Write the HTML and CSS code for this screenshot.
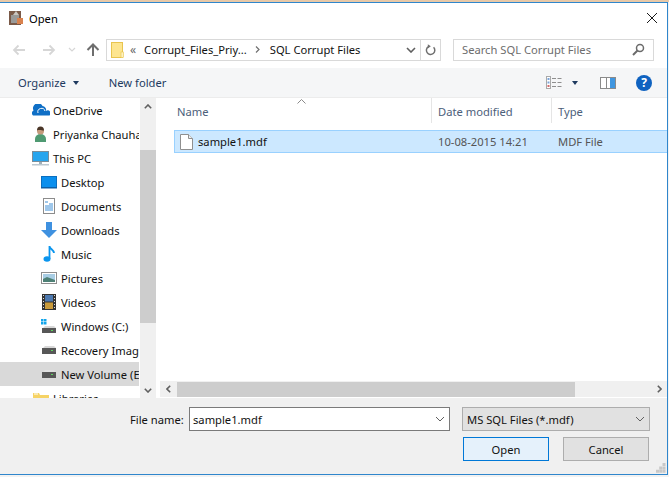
FILE: index.html
```html
<!DOCTYPE html>
<html lang="en">
<head>
<meta charset="utf-8">
<title>Open</title>
<link rel="stylesheet" href="styles.css">
</head>
<body>
<div class="desktop"></div>
<div class="window">
  <header class="titlebar">
    <svg class="app-icon" width="14" height="16" viewBox="0 0 14 16"><rect x="0" y="1" width="12" height="14" fill="#7a5a48"/><rect x="2" y="5" width="8" height="8" fill="#9a9a98"/><path d="M4 5l3-4 3 4z" fill="#c9c6c0"/><rect x="8" y="8" width="6" height="6" fill="#d9824e"/></svg>
    <span class="title">Open</span>
    <svg class="close" width="12" height="12" viewBox="0 0 12 12"><path d="M1 1l10 10M11 1L1 11" stroke="#1a1a1a" stroke-width="1" fill="none"/></svg>
  </header>

  <nav class="nav">
    <svg class="nav-arrow" width="14" height="12" viewBox="0 0 14 12"><path d="M13 6H2M6.500 1.500L2 6l4.500 4.500" stroke="#d6d6d6" stroke-width="1.800" fill="none"/></svg>
    <svg class="nav-arrow fwd" width="14" height="12" viewBox="0 0 14 12"><path d="M1 6h11M7.500 1.500L12 6l-4.500 4.500" stroke="#d6d6d6" stroke-width="1.800" fill="none"/></svg>
    <svg class="nav-drop" width="8" height="5" viewBox="0 0 8 5"><path d="M1 1l3 3 3-3" stroke="#d6d6d6" stroke-width="1.200" fill="none"/></svg>
    <svg class="nav-up" width="14" height="13" viewBox="0 0 14 13"><path d="M7 13V2M1.500 7L7 1.500 12.500 7" stroke="#6e6e6e" stroke-width="2" fill="none"/></svg>
    <div class="address">
      <svg class="folder" width="13" height="16" viewBox="0 0 13 16"><rect x=".5" y=".5" width="11" height="15" fill="#fde58f" stroke="#e8c44e"/><rect x="10" y="10" width="2.500" height="5.500" fill="#fff3bf" stroke="#e8c44e" stroke-width=".6"/></svg>
      <span class="crumb-more">«</span>
      <span class="crumb">Corrupt_Files_Priy...</span>
      <svg class="crumb-sep" width="5" height="7" viewBox="0 0 5 7"><path d="M1 .5l3 3-3 3" stroke="#707070" stroke-width="1.200" fill="none"/></svg>
      <span class="crumb">SQL Corrupt Files</span>
      <svg class="addr-drop" width="10" height="6" viewBox="0 0 10 6"><path d="M1 1l4 4 4-4" stroke="#5f5f5f" stroke-width="1.600" fill="none"/></svg>
      <span class="addr-refresh">
        <svg width="11" height="12" viewBox="0 0 11 12"><path d="M8.600 3.300A4.200 4.200 0 1 1 3.500 2.600" stroke="#6f6f6f" stroke-width="1.500" fill="none"/><path d="M2.800 .2v4.400l3-2.400z" fill="#6f6f6f"/></svg>
      </span>
    </div>
    <div class="search">
      <span>Search SQL Corrupt Files</span>
      <svg width="13" height="13" viewBox="0 0 13 13"><circle cx="8" cy="5" r="3.500" stroke="#6b6b6b" stroke-width="1.500" fill="none"/><path d="M5.500 7.500L1 12" stroke="#6b6b6b" stroke-width="2"/></svg>
    </div>
  </nav>

  <div class="toolbar">
    <span class="tool organize">Organize</span>
    <span class="caret"></span>
    <span class="tool new-folder">New folder</span>
    <svg class="views" width="16" height="13" viewBox="0 0 16 13"><rect x=".5" y=".5" width="4" height="12" fill="#fff" stroke="#a9a9a9"/><rect x="1.500" y="2" width="2" height="2" fill="#7aa3d8"/><rect x="1.500" y="5.500" width="2" height="2" fill="#7aa3d8"/><rect x="1.500" y="9" width="2" height="2" fill="#d36a6a"/><path d="M6 2.500h4M11.500 2.500h4M6 6.500h4M11.500 6.500h4M6 10.500h4M11.500 10.500h4" stroke="#8e8e8e"/></svg>
    <span class="caret views-caret"></span>
    <svg class="pane" width="16" height="12" viewBox="0 0 16 12"><rect x=".5" y=".5" width="15" height="11" fill="#fff" stroke="#8a8a8a"/><rect x="6" y="1" width="1" height="10" fill="#8a8a8a"/><rect x="10" y="1" width="5" height="10" fill="#3f96e0"/></svg>
    <span class="help">?</span>
  </div>

  <div class="content">
    <aside class="sidebar">
      <ul class="tree">
        <li class="row lvl1"><svg width="18" height="12" viewBox="0 0 18 12"><path d="M1 11.500a3 3 0 0 1 .5-5 5 5 0 0 1 9-4.500 4 4 0 0 1 3.500 5 2.500 2.500 0 0 1 3.500 4.500z" fill="#0f6fc6"/><path d="M6 9a3.500 3.500 0 0 1 7-2" stroke="#fff" fill="none"/></svg><span>OneDrive</span></li>
        <li class="row lvl1"><svg width="13" height="16" viewBox="0 0 13 16"><path d="M1 16v-3a5.500 5 0 0 1 11 0v3z" fill="#4f9a72"/><circle cx="6.500" cy="5" r="3.500" fill="#c49a7c"/><path d="M3 4.500a3.500 4 0 0 1 7 0c-2 0-5-1-7 0z" fill="#4a3628"/></svg><span>Priyanka Chauhan</span></li>
        <li class="row lvl1"><svg width="17" height="15" viewBox="0 0 17 15"><rect x=".5" y=".5" width="16" height="10" fill="#27a5ee" stroke="#7b8d99"/><rect x="7" y="11" width="3" height="2" fill="#9fb0ba"/><rect x="0" y="13" width="17" height="1.500" fill="#bcc8d0"/></svg><span>This PC</span></li>
        <li class="row lvl2"><svg width="16" height="13" viewBox="0 0 16 13"><rect x=".5" y=".5" width="15" height="11" fill="#0a8fee" stroke="#0b6fc0"/><rect x="0" y="11" width="16" height="1.500" fill="#0c5fa6"/></svg><span>Desktop</span></li>
        <li class="row lvl2"><svg width="12" height="16" viewBox="0 0 12 16"><rect x=".5" y=".5" width="11" height="15" fill="#fff" stroke="#8c8c8c"/><path d="M2 4h3M6 6h4M2 8h8M2 10h8M2 12h8" stroke="#3f8fd6"/></svg><span>Documents</span></li>
        <li class="row lvl2"><svg width="16" height="16" viewBox="0 0 16 16"><path d="M5 0h6v8h5l-8 8-8-8h5z" fill="#3f91e0"/></svg><span>Downloads</span></li>
        <li class="row lvl2"><svg width="12" height="16" viewBox="0 0 12 16"><ellipse cx="4" cy="13" rx="3.500" ry="2.800" fill="#0a95ee"/><path d="M6.500 13V0c0 3 4.500 3.500 4.500 7" stroke="#0a95ee" stroke-width="1.800" fill="none"/></svg><span>Music</span></li>
        <li class="row lvl2"><svg width="16" height="12" viewBox="0 0 16 12"><rect x=".5" y=".5" width="15" height="11" fill="#fff" stroke="#8e8e8e"/><rect x="2" y="2" width="12" height="8" fill="#a8cde4"/><path d="M2 7l4-2 8 3v2H2z" fill="#4d8075"/></svg><span>Pictures</span></li>
        <li class="row lvl2"><svg width="14" height="16" viewBox="0 0 14 16"><rect width="14" height="16" fill="#333"/><rect x="3" y="1" width="8" height="6.500" fill="#4d79b0"/><rect x="3" y="8.500" width="8" height="6.500" fill="#c99a3a"/><path d="M1 1.500h1M1 4.500h1M1 7.500h1M1 10.500h1M1 13.500h1M12 1.500h1M12 4.500h1M12 7.500h1M12 10.500h1M12 13.500h1" stroke="#ddd"/></svg><span>Videos</span></li>
        <li class="row lvl2"><svg width="16" height="15" viewBox="0 0 16 15"><path d="M0 0h2.500v2.500H0zM3 0h2.500v2.500H3zM0 3h2.500v2.500H0zM3 3h2.500v2.500H3z" fill="#12a5ea"/><path d="M2 9l2-2h9l2 2z" fill="#d8d8d8"/><rect x="1" y="9" width="14" height="5" fill="#575757"/><rect x="10" y="11" width="2" height="1" fill="#5fd35f"/></svg><span>Windows (C:)</span></li>
        <li class="row lvl2"><svg class="drive" width="16" height="9" viewBox="0 0 16 9"><path d="M2 2l2-2h9l2 2z" fill="#d8d8d8"/><rect x="1" y="2" width="14" height="6" fill="#575757"/><rect x="10" y="4" width="2" height="1" fill="#5fd35f"/></svg><span>Recovery Image</span></li>
        <li class="row lvl2 selected"><svg class="drive" width="16" height="9" viewBox="0 0 16 9"><path d="M2 2l2-2h9l2 2z" fill="#e0e0e0"/><rect x="1" y="2" width="14" height="6" fill="#575757"/><rect x="10" y="4" width="2" height="1" fill="#5fd35f"/></svg><span>New Volume (E:)</span></li>
        <li class="row lvl1 libraries"><svg width="16" height="13" viewBox="0 0 16 13"><path d="M0 1h6l1 2h9v10H0z" fill="#f6d365"/><rect x="1" y="1.500" width="4" height="1" fill="#fff"/></svg><span>Libraries</span></li>
      </ul>
      <div class="vscroll">
        <svg class="sb-arrow" width="8" height="5" viewBox="0 0 8 5"><path d="M.8 4.200L4 1l3.200 3.200" stroke="#606060" stroke-width="1.600" fill="none"/></svg>
        <div class="vthumb"></div>
        <svg class="sb-arrow down" width="8" height="5" viewBox="0 0 8 5"><path d="M.8.800L4 4l3.200-3.200" stroke="#606060" stroke-width="1.600" fill="none"/></svg>
      </div>
    </aside>

    <section class="main">
      <div class="columns">
        <svg class="sort" width="9" height="5" viewBox="0 0 9 5"><path d="M.5 4.500l4-4 4 4" stroke="#8a8a8a" fill="none"/></svg>
        <div class="col col-name">Name</div>
        <div class="col col-date">Date modified</div>
        <div class="col col-type">Type</div>
      </div>
      <div class="file">
        <div class="cell-name">
          <svg width="13" height="16" viewBox="0 0 13 16"><path d="M.5.500h8l4 4v11H.5z" fill="#fff" stroke="#8f8f8f"/><path d="M8.500.500v4h4" fill="#eee" stroke="#8f8f8f"/></svg>
          <span>sample1.mdf</span>
        </div>
        <div class="cell-date">10-08-2015 14:21</div>
        <div class="cell-type">MDF File</div>
      </div>
      <div class="spacer"></div>
      <div class="hscroll">
        <svg class="sb-h" width="5" height="8" viewBox="0 0 5 8"><path d="M4.200.800L1 4l3.200 3.200" stroke="#606060" stroke-width="1.600" fill="none"/></svg>
        <div class="hthumb"></div>
        <svg class="sb-h right" width="5" height="8" viewBox="0 0 5 8"><path d="M.8.800L4 4 .8 7.200" stroke="#606060" stroke-width="1.600" fill="none"/></svg>
      </div>
    </section>
  </div>

  <footer class="footer">
    <div class="file-row">
      <label class="file-label">File name:</label>
      <div class="file-input">
        <span>sample1.mdf</span>
        <svg width="10" height="6" viewBox="0 0 10 6"><path d="M1 1l4 4 4-4" stroke="#606060" fill="none"/></svg>
      </div>
      <div class="file-type">
        <span>MS SQL Files (*.mdf)</span>
        <svg width="10" height="6" viewBox="0 0 10 6"><path d="M1 1l4 4 4-4" stroke="#606060" fill="none"/></svg>
      </div>
    </div>
    <div class="buttons">
      <button class="btn primary">Open</button>
      <button class="btn">Cancel</button>
    </div>
    <svg class="grip" width="10" height="10" viewBox="0 0 10 10"><path d="M6.500 0h3v3h-3zM3.200 3.400h3v3h-3zM6.500 3.400h3v3h-3zM0 6.800h3v3H0zM3.200 6.800h3v3h-3zM6.500 6.800h3v3h-3z" fill="#c8c8c8"/></svg>
  </footer>
</div>
</body>
</html>
```
FILE: styles.css
```css
* { box-sizing: border-box; }
html, body { margin: 0; padding: 0; }
body {
  width: 669px;
  height: 477px;
  overflow: hidden;
  background: #f2f2f2;
  font-family: "Noto Sans", "Open Sans", sans-serif;
  font-size: 11.2px;
  color: #111;
}
.desktop { height: 2px; background: #e8c9a8; }
.window {
  position: relative;
  width: 668px;
  height: 473px;
  border-top: 1px solid #2f86cc;
  border-right: 1px solid #2f86cc;
  border-bottom: 1px solid #2f86cc;
  display: flex;
  flex-direction: column;
  background: #fff;
  overflow: hidden;
}
.titlebar { height: 30px; display: flex; align-items: center; padding: 0 9px 0 9px; flex: none; }
.title { margin-left: 6px; color: #000; }
.close { margin-left: auto; }
.nav { height: 35px; flex: none; display: flex; align-items: center; padding: 0 0 2px 12px; }
.fwd { margin-left: 16px; }
.nav-drop { margin-left: 12px; }
.nav-up { margin-left: 10px; }
.address {
  width: 335px; height: 22px; margin-left: 6px;
  border: 1px solid #d9d9d9;
  display: flex; align-items: center; padding-left: 4px;
}
.crumb-more { margin-left: 6px; color: #666; font-size: 12px; }
.crumb { margin-left: 8px; color: #111; }
.crumb-sep { margin-left: 8px; }
.crumb-sep + .crumb { margin-left: 10px; }
.addr-drop { margin-left: auto; margin-right: 4px; }
.addr-refresh {
  width: 20px; height: 20px; border-left: 1px solid #d9d9d9;
  display: flex; align-items: center; justify-content: center;
}
.search {
  width: 201px; height: 22px; margin-left: 12px;
  border: 1px solid #d9d9d9;
  display: flex; align-items: center; justify-content: space-between;
  padding: 0 8px 0 8px; color: #6d6d6d;
}
.toolbar {
  height: 30px; flex: none; background: #f5f6f7;
  display: flex; align-items: center; padding-left: 18px;
  border-bottom: 1px solid #ececec;
}
.tool { color: #1e3a5f; }
.caret { width: 0; height: 0; border: 3.500px solid transparent; border-top: 4px solid #1e3a5f; border-bottom: 0; margin-left: 7px; }
.new-folder { margin-left: 30px; }
.views { margin-left: auto; }
.views-caret { margin-left: 10px; }
.pane { margin-left: 22px; }
.help {
  width: 16px; height: 16px; border-radius: 50%; background: #0f62c0; color: #fff;
  font-weight: 700; font-size: 12px; line-height: 16px; text-align: center;
  margin: 0 15px 0 20px;
}
.content { flex: 1; display: flex; min-height: 0; }
.sidebar { width: 156px; flex: none; display: flex; position: relative; height: 300px; overflow: hidden; }
.tree { list-style: none; margin: 0; padding: 0; width: 139px; flex: none; overflow: hidden; }
.row {
  height: 24px; display: grid; grid-template-columns: 17px max-content; column-gap: 4px;
  align-items: center; white-space: nowrap; color: #111; overflow: hidden;
}
.row svg { justify-self: center; }
.lvl1 { padding-left: 32px; }
.lvl2 { padding-left: 40px; }
.selected { background: #d9d9d9; }
.vscroll {
  width: 16px; margin-left: 1px; background: #f0f0f0; height: 300px;
  display: flex; flex-direction: column; align-items: center; flex: none;
}
.sb-arrow { margin-top: 6px; margin-bottom: 41px; flex: none; }
.vthumb { width: 16px; height: 173px; background: #cdcdcd; flex: none; }
.sb-arrow.down { margin-top: auto; margin-bottom: 5px; }
.main { flex: 1; display: flex; flex-direction: column; margin-left: 4px; min-width: 0; position: relative; }
.columns { height: 32px; display: flex; flex: none; position: relative; }
.sort { position: absolute; left: 137px; top: 1px; }
.col { height: 25px; display: flex; align-items: center; padding: 2px 0 0 17px; color: #4c607a; }
.col-name { width: 272px; border-right: 1px solid #e5e5e5; }
.col-date { width: 120px; padding-left: 6px; border-right: 1px solid #e5e5e5; }
.col-type { padding-left: 6px; }
.file {
  height: 23px; margin-left: 14px; flex: none;
  background: #cce8ff; border: 1px solid #99d1ff; border-right: 0;
  display: flex; align-items: center;
}
.cell-name { width: 250px; padding-left: 5px; display: flex; align-items: center; color: #111; flex: none; }
.cell-name span { margin-left: 5px; }
.cell-date { width: 133px; color: #555; flex: none; padding-left: 13px; }
.cell-type { color: #555; }
.spacer { flex: 1; }
.hscroll {
  height: 16px; background: #f0f0f0; display: flex; align-items: center; flex: none;
  margin-bottom: 1px;
}
.sb-h { margin-left: 6px; flex: none; }
.hthumb { width: 398px; height: 15px; background: #cdcdcd; margin-left: 6px; flex: none; }
.sb-h.right { margin-left: auto; margin-right: 5px; }
.footer { height: 76px; flex: none; background: #f0f0f0; position: relative; padding-top: 9px; }
.file-row { display: flex; align-items: center; }
.file-label { margin-left: 130px; color: #111; width: 59px; }
.file-input {
  width: 261px; height: 24px; background: #fff; border: 1px solid #7a7a7a;
  display: flex; align-items: center; justify-content: space-between; padding: 0 4px 0 3px;
}
.file-type {
  width: 188px; height: 24px; margin-left: 12px; background: #e1e1e1; border: 1px solid #adadad;
  display: flex; align-items: center; justify-content: space-between; padding: 0 4px 0 4px;
}
.buttons { display: flex; margin-top: 6px; padding-left: 463px; gap: 14px; }
.btn {
  width: 86px; height: 24px; padding: 0; background: #e1e1e1; border: 1px solid #adadad;
  font-family: inherit; font-size: 11.200px; color: #111;
}
.btn.primary { background: #e5f1fb; border: 1px solid #0078d7; }
.grip { position: absolute; right: 1px; bottom: 1px; }
```
